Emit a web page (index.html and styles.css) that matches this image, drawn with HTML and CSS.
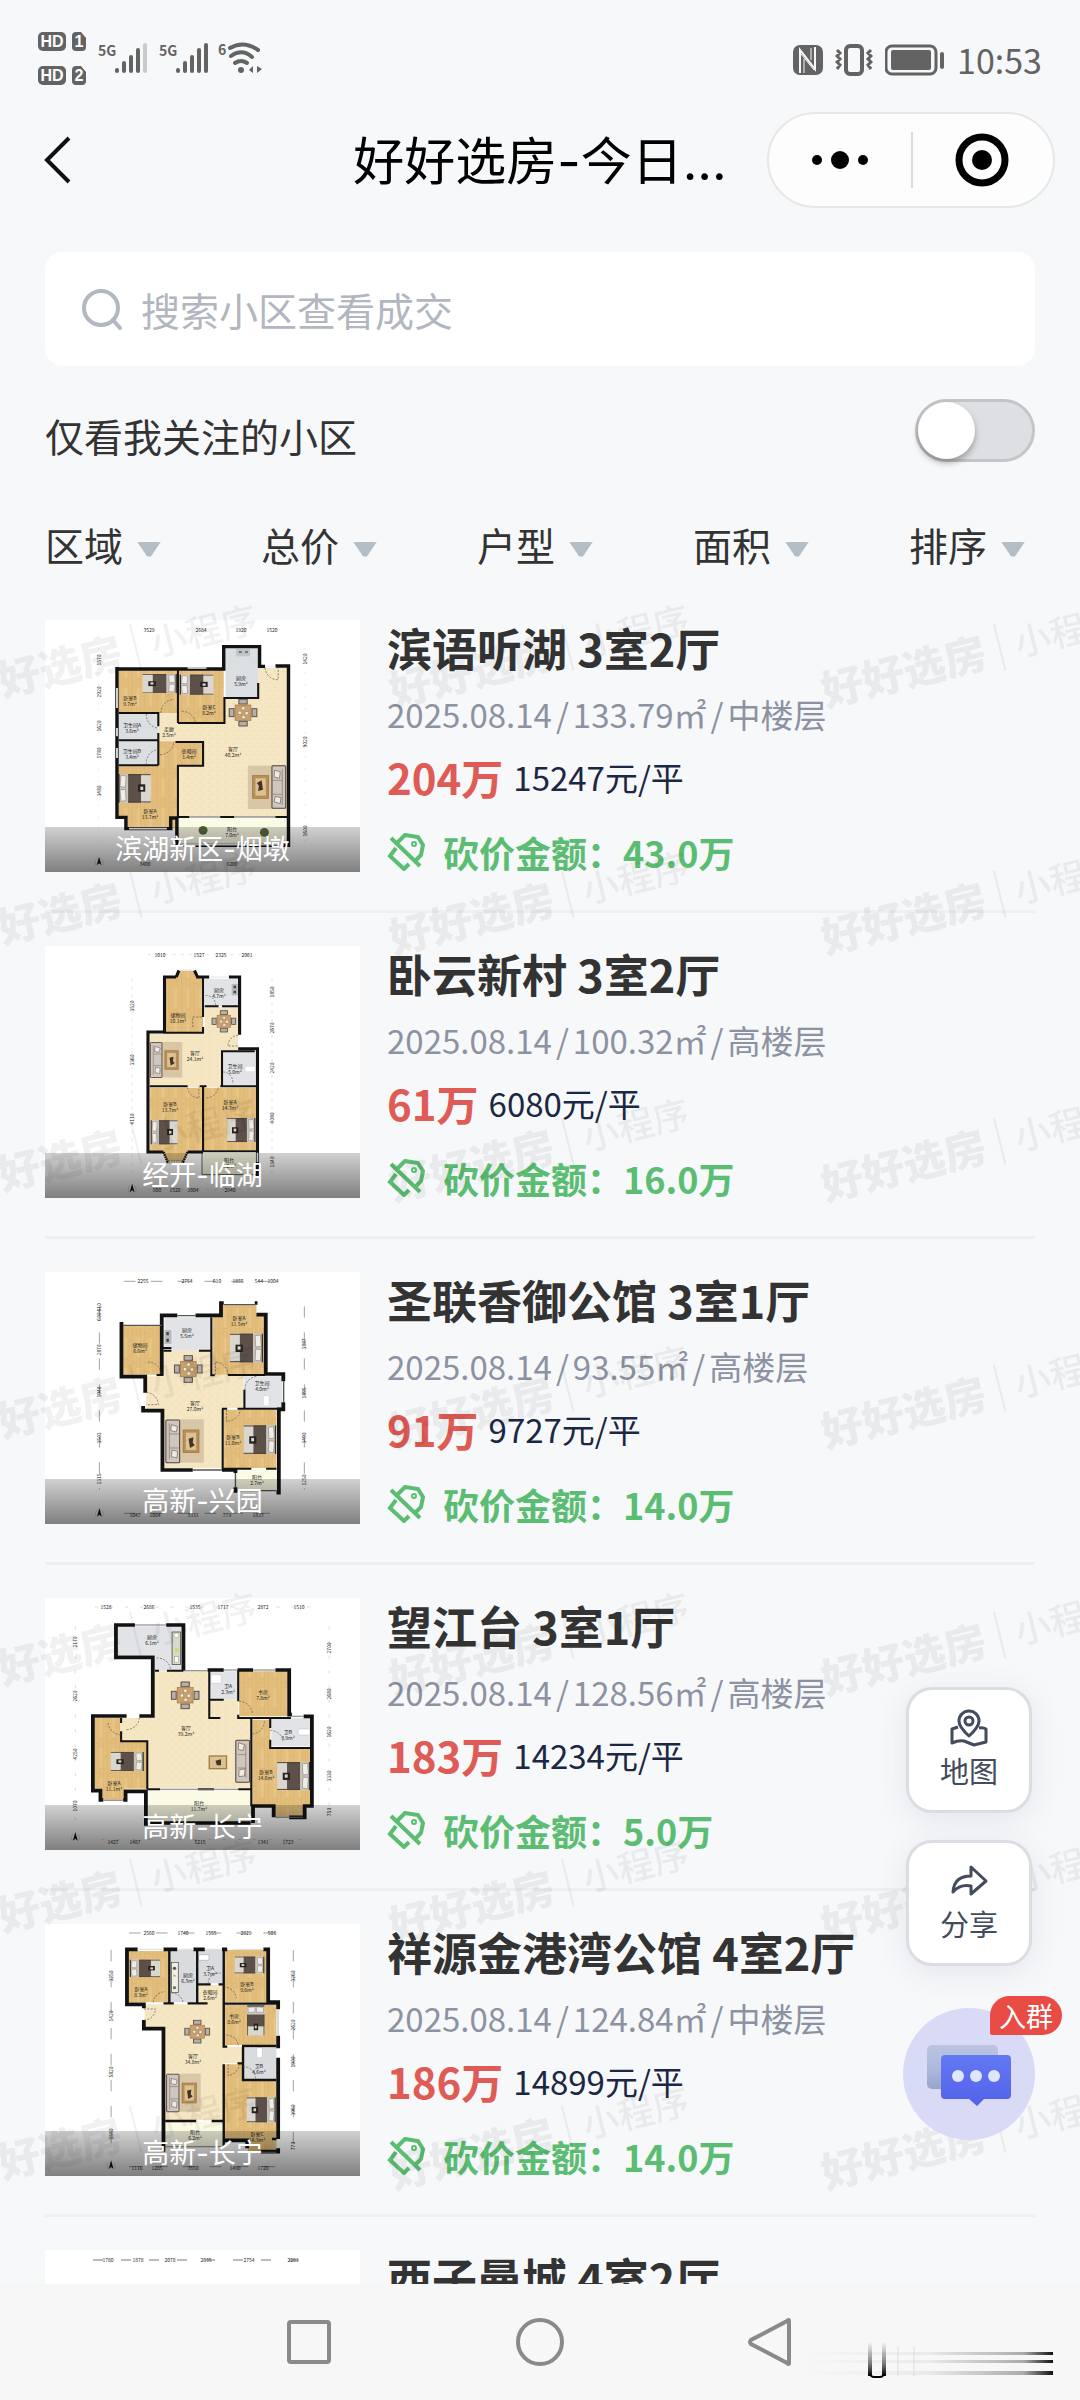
FILE: index.html
```html
<!DOCTYPE html>
<html lang="zh-CN">
<head>
<meta charset="utf-8">
<meta name="viewport" content="width=device-width, initial-scale=1">
<title>好好选房-今日成交</title>
<link rel="stylesheet" href="styles.css">
</head>
<body>
<!-- Shared furniture and floor textures for the plans -->
<svg class="defs" width="0" height="0" aria-hidden="true">
  <defs>
    <pattern id="wood" width="36" height="90" patternUnits="userSpaceOnUse">
      <rect width="36" height="90" fill="#e2bd7b"/>
      <rect width="12" height="60" fill="#e7c586"/>
      <path d="M0 0V90M12 0V90M24 0V90M0 60H12M12 25H24M24 75H36" stroke="#d3a964" stroke-width="1"/>
    </pattern>
    <pattern id="tile" width="24" height="24" patternUnits="userSpaceOnUse">
      <rect width="24" height="24" fill="#f6e7c4"/>
      <path d="M3 5H10M15 14H21M6 20H9" stroke="#eed9a9" stroke-width="2"/>
    </pattern>
    <g id="bed">
      <rect width="100" height="86" fill="#dad6d0"/>
      <rect x="30" width="40" height="86" fill="#5c5048"/>
      <path d="M0 2H70M0 84H70" stroke="#4c423b" stroke-width="3"/>
      <rect x="17" y="33" width="22" height="22" fill="#26221f"/>
      <rect x="23" y="38" width="9" height="10" fill="#d9d5cf"/>
      <rect x="70" width="28" height="86" fill="#c9c5bd"/>
      <path d="M76 6L92 4L95 38L78 40ZM78 46L95 48L92 82L76 80Z" fill="#efede8" stroke="#8d877f" stroke-width="2"/>
      <path d="M98 0V86" stroke="#3a332d" stroke-width="4"/>
    </g>
    <g id="table">
      <rect x="28" y="0" width="24" height="14" fill="#b7afa8" stroke="#5d534b" stroke-width="3"/>
      <rect x="28" y="66" width="24" height="14" fill="#b7afa8" stroke="#5d534b" stroke-width="3"/>
      <rect x="0" y="28" width="14" height="24" fill="#b7afa8" stroke="#5d534b" stroke-width="3"/>
      <rect x="66" y="28" width="14" height="24" fill="#b7afa8" stroke="#5d534b" stroke-width="3"/>
      <rect x="17" y="17" width="46" height="46" fill="#caa06c" stroke="#9a744a" stroke-width="2"/>
      <path d="M26 36h9v9h-9zM36 22h9v9h-9zM46 37h9v9h-9zM37 49h9v9h-9z" fill="#f8f1e2" stroke="#7c5c3b"/>
    </g>
    <g id="sofa">
      <rect x="38" y="0" width="72" height="130" fill="#d8c6a7"/>
      <rect x="50" y="32" width="46" height="68" fill="#b98f55" stroke="#94703f" stroke-width="2"/>
      <rect x="58" y="40" width="30" height="52" fill="#dcc193"/>
      <path d="M66 58L80 54L78 70L84 78L70 86Z" fill="#453425"/>
      <rect x="0" y="2" width="40" height="128" rx="3" fill="#cfc6be" stroke="#4b423c" stroke-width="3"/>
      <path d="M10 12V120M10 44H38M10 86H38" stroke="#80766e" stroke-width="2"/>
      <path d="M16 16L34 22L30 38L14 34ZM18 92L34 96L32 116L16 112Z" fill="#eeeae5" stroke="#6a6059" stroke-width="2"/>
    </g>
    <g id="north">
      <path d="M10 0L17 26L10 20L3 26Z" fill="#161616"/>
      <path d="M0 26Q-4 12 4 5M20 26Q24 12 16 5" fill="none" stroke="#999" stroke-width="1"/>
    </g>
  </defs>
</svg>

<div class="app">
  <header>
    <div class="status">
      <svg class="status-left" viewBox="0 0 250 80" role="img" aria-label="HD 1, HD 2, 5G, 5G, Wi-Fi 6">
        <g fill="#636363">
          <rect x="8" y="12" width="28" height="19" rx="5"/>
          <path d="M46 12H51L56 18V27Q56 31 52 31H46Q42 31 42 27V16Q42 12 46 12Z"/>
          <rect x="8" y="46" width="28" height="19" rx="5"/>
          <path d="M46 46H51L56 52V61Q56 65 52 65H46Q42 65 42 61V50Q42 46 46 46Z"/>
        </g>
        <g class="hd-text"><text x="22" y="27">HD</text><text x="49" y="27">1</text><text x="22" y="61">HD</text><text x="49" y="61">2</text></g>
        <g class="net-text"><text x="68" y="36">5G</text><text x="129" y="36">5G</text><text x="188" y="35">6</text></g>
        <g stroke="#636363" stroke-width="4" stroke-linecap="round">
          <path d="M87 50V51M94 43V51M101 37V51M108 30V51"/>
          <path d="M115 25V51" stroke="#c9cacb"/>
          <path d="M148 50V51M155 43V51M162 37V51M169 30V51M176 25V51"/>
        </g>
        <g fill="none" stroke="#636363" stroke-width="4" stroke-linecap="round">
          <path d="M200 28Q214 20 228 30M201 36Q212 28 222 37M205 43Q211 39 217 43"/>
        </g>
        <circle cx="211" cy="50" r="3" fill="#636363"/>
        <path d="M219 50L223 46V53ZM232 49L227 46V53Z" fill="#636363"/>
      </svg>
      <div class="status-right">
        <svg width="30" height="30" viewBox="0 0 30 30" aria-hidden="true"><rect width="30" height="30" rx="7" fill="#636363"/><path d="M7 28V5L22 24V2" fill="none" stroke="#f7f8fa" stroke-width="2"/><path d="M8 9L21 25M11 28V14M18 15V3" stroke="#f7f8fa" stroke-width="1"/></svg>
        <svg width="38" height="32" viewBox="0 0 38 32" aria-hidden="true" fill="none" stroke="#636363"><rect x="11" y="2" width="16" height="28" rx="4" stroke-width="4"/><path d="M2 6L5 9L2 12L5 15L2 18L5 21L2 25M36 6L33 9L36 12L33 15L36 18L33 21L36 25" stroke-width="3"/></svg>
        <svg width="60" height="32" viewBox="0 0 60 32" aria-hidden="true"><rect x="1" y="2" width="50" height="28" rx="6" fill="none" stroke="#636363" stroke-width="3"/><rect x="6" y="6" width="40" height="20" rx="2" fill="#636363"/><path d="M57 10V23" stroke="#636363" stroke-width="4" stroke-linecap="round"/></svg>
        <time>10:53</time>
      </div>
    </div>

    <div class="titlebar">
      <button class="back" type="button" aria-label="返回"><svg width="28" height="48" viewBox="0 0 28 48" fill="none" stroke="#111" stroke-width="4"><path d="M25 2L3 24L25 46"/></svg></button>
      <h1>好好选房-今日...</h1>
      <div class="capsule">
        <button type="button" aria-label="更多"><svg width="60" height="24" viewBox="0 0 60 24"><circle cx="7" cy="12" r="5"/><circle cx="30" cy="12" r="9"/><circle cx="53" cy="12" r="5"/></svg></button>
        <button type="button" aria-label="关闭"><svg width="56" height="56" viewBox="0 0 56 56"><circle cx="28" cy="28" r="23" fill="none" stroke="#000" stroke-width="7"/><circle cx="28" cy="28" r="10"/></svg></button>
      </div>
    </div>
  </header>

  <main>
    <label class="search">
      <svg width="42" height="42" viewBox="0 0 42 42" fill="none" stroke="#b2b8c2" stroke-width="4"><circle cx="20" cy="20" r="17"/><path d="M32 32L39 40" stroke-linecap="round"/></svg>
      <input type="search" placeholder="搜索小区查看成交" aria-label="搜索小区查看成交">
    </label>

    <label class="follow">
      <span>仅看我关注的小区</span>
      <input type="checkbox" role="switch">
    </label>

    <div class="filters">
      <button type="button">区域<i></i></button>
      <button type="button">总价<i></i></button>
      <button type="button">户型<i></i></button>
      <button type="button">面积<i></i></button>
      <button type="button">排序<i></i></button>
    </div>

    <div class="list">
      <article class="item">
        <figure>
          <svg class="plan" viewBox="0 0 315 252">
            <g transform="scale(.3444 .3333) translate(-131 -66)">
              <path d="M520 375H652V300H750V210H835V655H520ZM460 345H520V430H460Z" fill="url(#tile)"/>
              <path d="M345 215H515V345H345ZM520 215H650V375H520ZM515 435H590V500H515ZM345 505H460V430H515V690H370V660H345Z" fill="url(#wood)"/>
              <path d="M655 150H750V298H655ZM345 348H460V425H345ZM345 430H460V500H345Z" fill="#dcdfe2"/>
              <path d="M520 660H832V738H520Z" fill="#fbfae4"/>
              <use href="#bed" transform="translate(414 228) scale(1 .66)"/>
              <use href="#bed" transform="translate(620 290) rotate(180) scale(.98 .7)"/>
              <use href="#bed" transform="translate(438 614) rotate(180) scale(.94 1)"/>
              <use href="#table" transform="translate(666 304)"/>
              <use href="#sofa" transform="translate(830 633) rotate(180)"/>
              <rect x="686" y="153" width="40" height="22" fill="#bfc4c8"/><path d="M694 162H702M712 162H720" stroke="#555" stroke-width="5"/>
              <g fill="none" stroke="#121212" stroke-linejoin="miter">
                <path d="M340 207V658H366V692H496V660H514V742H838V204H800M340 213H650V146H754V205H770M515 742H838" stroke-width="10"/>
                <path d="M517 213V375M517 375H652V300H750V255M345 345H460V385M345 427H460M460 405V502M345 502H460M510 432H590V503H517V660M520 657H550M640 657H680M800 657H835" stroke-width="6"/>
                <path d="M550 657H800" stroke-width="2"/>
              </g>
              <path d="M545 210H600M340 270V330M340 390V415M340 450V480M375 692H485M770 206H800M525 740H825" stroke="#eceff1" stroke-width="5"/>
              <path d="M468 345A36 38 0 0 1 505 305M528 340A40 38 0 0 1 568 375M425 348A36 42 0 0 0 458 390M425 500A36 42 0 0 1 458 455M465 470A40 40 0 0 0 505 432M770 210A36 38 0 0 0 808 245V205" fill="none" stroke="#555" stroke-width="2" stroke-dasharray="6 4"/>
              <circle cx="590" cy="697" r="13" fill="#596b3d"/><circle cx="768" cy="703" r="13" fill="#596b3d"/>
              <path d="M286 150V745M886 150V745" stroke="#ccc" stroke-width="1" stroke-dasharray="6 30"/>
              <use href="#north" x="278" y="776"/>
            </g>
            <g class="plan-text">
              <text x="104" y="12">3529</text><text x="156" y="12">2684</text><text x="196" y="12">1920</text><text x="227" y="12">1520</text>
              <text x="85" y="80">卧室B</text><text x="85" y="86">9.7m²</text><text x="164" y="89">卧室C</text><text x="164" y="95">8.2m²</text><text x="196" y="60">厨房</text><text x="196" y="66">5.9m²</text>
              <text x="87" y="107">卫生间A</text><text x="87" y="113">3.6m²</text><text x="87" y="133">卫生间B</text><text x="87" y="139">3.4m²</text><text x="124" y="111">走廊</text><text x="124" y="117">2.5m²</text><text x="144" y="133">衣帽间</text><text x="144" y="139">1.4m²</text>
              <text x="188" y="131">客厅</text><text x="188" y="137">40.2m²</text><text x="105" y="193">卧室A</text><text x="105" y="199">13.7m²</text><text x="187" y="211">阳台</text><text x="187" y="217">7.0m²</text>
              <text x="100" y="246">3400</text><text x="187" y="246">6200</text>
            </g>
            <g class="plan-text side"><text transform="translate(56 40) rotate(-90)">1570</text><text transform="translate(56 72) rotate(-90)">2920</text><text transform="translate(56 106) rotate(-90)">1620</text><text transform="translate(56 133) rotate(-90)">1780</text><text transform="translate(56 171) rotate(-90)">3480</text><text transform="translate(262 39) rotate(-90)">1420</text><text transform="translate(262 122) rotate(-90)">9020</text><text transform="translate(262 211) rotate(-90)">1600</text></g>
          </svg>
          <figcaption>滨湖新区-烟墩</figcaption>
        </figure>
        <div class="info">
          <h2>滨语听湖 3室2厅</h2>
          <p class="meta"><span>2025.08.14</span><span>/</span><span>133.79㎡</span><span>/</span><span>中楼层</span></p>
          <p class="price"><strong>204万</strong><span>15247元/平</span></p>
          <p class="cut"><svg class="tag" viewBox="0 0 38 38"><path d="M11 9L18 2L31 4L36 12L34 22L29 27M22 31L17 36L3 23L9 15M4 5L33 33"/><circle cx="27" cy="11" r="1"/></svg>砍价金额：43.0万</p>
        </div>
      </article>

      <article class="item">
        <figure>
          <svg class="plan" viewBox="0 0 315 252">
            <g transform="scale(.3444 .3333) translate(-131 -52)">
              <path d="M432 315H595V235H692V365H645V475H432Z" fill="url(#tile)"/>
              <path d="M480 145H512L520 125H565L572 145H590V312H480ZM435 477H588V668H545L530 700H485L475 668H435ZM592 477H743V665H592Z" fill="url(#wood)"/>
              <path d="M595 150H692V233H595ZM645 368H743V470H645Z" fill="#e1e3e6"/>
              <path d="M592 668H743V742H592Z" fill="#fbfae4"/>
              <rect x="673" y="166" width="18" height="34" fill="#b5babe"/><path d="M682 171V179M682 186V194" stroke="#444" stroke-width="7"/>
              <rect x="712" y="413" width="30" height="16" rx="4" fill="#fff" stroke="#bbb"/>
              <use href="#sofa" transform="translate(437 340) scale(.84 .82)"/>
              <use href="#table" transform="translate(616 246) scale(.86 .8)"/>
              <use href="#bed" transform="translate(516 647) rotate(180) scale(.78 .84)"/>
              <use href="#bed" transform="translate(660 568) scale(.82 .84)"/>
              <g fill="none" stroke="#121212">
                <path d="M478 312V145H512M570 145H608M665 145H696V318M692 360H748V668M748 650V742M478 310H430V670H475M545 670H590M512 145L520 125M565 125L574 145" stroke-width="9"/>
                <path d="M590 145V265M590 295V312H475M595 233H635M645 233H692M645 368H740M645 365V470M435 473H545M580 473H600M640 473H745M590 475V668M590 668H745" stroke-width="6"/>
                <path d="M475 670L487 700H532L545 670" stroke-width="7" stroke-dasharray="5 2"/>
                <path d="M587 670V738H745" stroke-width="2"/>
              </g>
              <path d="M608 145H665M520 124H565M490 700H528M748 672V700" stroke="#eceff1" stroke-width="5"/>
              <path d="M597 200A30 32 0 0 1 627 232M692 320A32 32 0 0 0 662 352H692M560 295V265H590M545 477A34 34 0 0 0 578 508V475M600 508A36 36 0 0 0 634 475M648 430A30 30 0 0 1 676 465" fill="none" stroke="#555" stroke-width="2" stroke-dasharray="6 4"/>
              <path d="M430 78H745M384 150V745M790 150V745M430 782H745" stroke="#aaa" stroke-width="1" stroke-dasharray="8 16"/>
              <use href="#north" x="374" y="765"/>
            </g>
            <g class="plan-text">
              <text x="115" y="11">1010</text><text x="154" y="11">1527</text><text x="176" y="11">2325</text><text x="202" y="11">2061</text>
              <text x="133" y="71">储物间</text><text x="133" y="77">10.1m²</text><text x="174" y="46">厨房</text><text x="174" y="52">4.7m²</text><text x="150" y="109">客厅</text><text x="150" y="115">24.1m²</text><text x="190" y="122">卫生间</text><text x="190" y="128">5.0m²</text>
              <text x="125" y="160">卧室B</text><text x="125" y="166">13.7m²</text><text x="185" y="158">卧室A</text><text x="185" y="164">14.3m²</text><text x="184" y="216">阳台</text><text x="184" y="222">3.2m²</text>
              <text x="112" y="246">900</text><text x="130" y="246">1520</text><text x="148" y="246">1004</text><text x="185" y="246">2940</text>
            </g>
            <g class="plan-text side"><text transform="translate(89 60) rotate(-90)">3520</text><text transform="translate(89 114) rotate(-90)">3360</text><text transform="translate(89 173) rotate(-90)">4110</text><text transform="translate(229 46) rotate(-90)">1850</text><text transform="translate(229 82) rotate(-90)">2670</text><text transform="translate(229 122) rotate(-90)">2420</text><text transform="translate(229 172) rotate(-90)">4080</text><text transform="translate(229 216) rotate(-90)">1340</text></g>
          </svg>
          <figcaption>经开-临湖</figcaption>
        </figure>
        <div class="info">
          <h2>卧云新村 3室2厅</h2>
          <p class="meta"><span>2025.08.14</span><span>/</span><span>100.32㎡</span><span>/</span><span>高楼层</span></p>
          <p class="price"><strong>61万</strong><span>6080元/平</span></p>
          <p class="cut"><svg class="tag" viewBox="0 0 38 38"><path d="M11 9L18 2L31 4L36 12L34 22L29 27M22 31L17 36L3 23L9 15M4 5L33 33"/><circle cx="27" cy="11" r="1"/></svg>砍价金额：16.0万</p>
        </div>
      </article>

      <article class="item">
        <figure>
          <svg class="plan" viewBox="0 0 315 252">
            <g transform="scale(.3444 .3333) translate(-131 -72)">
              <path d="M475 308H612V380H708V480H645V660H475V490H425V385H475Z" fill="url(#tile)"/>
              <path d="M358 232H470V380H358ZM618 200H642V172H745V200H768V380H618ZM650 485H803V660H650Z" fill="url(#wood)"/>
              <path d="M478 208H612V308H478ZM710 385H820V480H710Z" fill="#e1e3e6"/>
              <path d="M685 662H803V728H685Z" fill="#fbfae4"/>
              <rect x="478" y="246" width="20" height="42" fill="#b5babe"/><path d="M487 252V262M487 272V282" stroke="#444" stroke-width="7"/>
              <rect x="765" y="443" width="17" height="30" rx="3" fill="#fff" stroke="#bbb"/>
              <use href="#table" transform="translate(507 323)"/>
              <use href="#sofa" transform="translate(482 514)"/>
              <use href="#bed" transform="translate(668 257) scale(.96 1)"/>
              <use href="#bed" transform="translate(708 532) scale(.94 1)"/>
              <g fill="none" stroke="#121212">
                <path d="M353 222V386H422V434M416 474V488H472V666H560M470 380V202H515M568 202H642V165H650M740 165H748M745 200H772V378H823V400M823 463V484H810V734H803M645 666H684V675M684 718V734" stroke-width="11"/>
                <path d="M472 300H498M475 308H498M578 308H614V382H624M614 208V380M455 381H475M662 381H770M710 425V480M645 482H660M690 482H820M647 482V665M650 662H730M773 662H803" stroke-width="6"/>
                <path d="M358 232H470M515 203H568M650 170H742M560 666H645M824 400V463M684 675V718M690 728H803" stroke-width="4" stroke="#555"/>
              </g>
              <path d="M430 342A38 38 0 0 1 468 380M425 433A38 38 0 0 1 460 470H425M626 380V342A38 38 0 0 1 662 380M658 485V520A40 38 0 0 0 698 485M712 425A40 36 0 0 1 748 385" fill="none" stroke="#555" stroke-width="2" stroke-dasharray="6 4"/>
              <path d="M360 100H815M289 175V725M884 175V725M360 796H803" stroke="#777" stroke-width="2" stroke-dasharray="34 44"/>
              <use href="#north" x="279" y="780"/>
            </g>
            <g class="plan-text">
              <text x="98" y="11">2255</text><text x="142" y="11">2754</text><text x="172" y="11">610</text><text x="193" y="11">1855</text><text x="214" y="11">544</text><text x="228" y="11">1004</text>
              <text x="95" y="75">储物间</text><text x="95" y="81">6.6m²</text><text x="142" y="60">厨房</text><text x="142" y="66">5.5m²</text><text x="194" y="48">卧室A</text><text x="194" y="54">11.5m²</text><text x="217" y="113">卫生间</text><text x="217" y="119">4.0m²</text><text x="150" y="133">客厅</text><text x="150" y="139">27.0m²</text><text x="188" y="167">卧室B</text><text x="188" y="173">11.0m²</text><text x="212" y="207">阳台</text><text x="212" y="213">2.7m²</text>
              <text x="90" y="245">1047</text><text x="110" y="245">1084</text><text x="148" y="245">3331</text><text x="182" y="245">779</text><text x="213" y="245">1833</text>
            </g>
            <g class="plan-text side"><text transform="translate(56 40) rotate(-90)">600 610</text><text transform="translate(56 78) rotate(-90)">2870</text><text transform="translate(56 120) rotate(-90)">1948</text><text transform="translate(56 166) rotate(-90)">3503</text><text transform="translate(56 207) rotate(-90)">1315</text><text transform="translate(261 72) rotate(-90)">3887</text><text transform="translate(261 121) rotate(-90)">1895</text><text transform="translate(261 166) rotate(-90)">3490</text><text transform="translate(261 208) rotate(-90)">1250</text></g>
          </svg>
          <figcaption>高新-兴园</figcaption>
        </figure>
        <div class="info">
          <h2>圣联香御公馆 3室1厅</h2>
          <p class="meta"><span>2025.08.14</span><span>/</span><span>93.55㎡</span><span>/</span><span>高楼层</span></p>
          <p class="price"><strong>91万</strong><span>9727元/平</span></p>
          <p class="cut"><svg class="tag" viewBox="0 0 38 38"><path d="M11 9L18 2L31 4L36 12L34 22L29 27M22 31L17 36L3 23L9 15M4 5L33 33"/><circle cx="27" cy="11" r="1"/></svg>砍价金额：14.0万</p>
        </div>
      </article>

      <article class="item">
        <figure>
          <svg class="plan" viewBox="0 0 315 252">
            <g transform="scale(.3444 .3333) translate(-131 -90)">
              <path d="M448 310H608V395H692V450H730V660H428V520H352V450H448Z" fill="url(#tile)"/>
              <path d="M695 310H835V445H695ZM275 450H350V520H428V662H362V695H292V662H275ZM733 455H785V540H903V710H885V746H797V710H733Z" fill="url(#wood)"/>
              <path d="M340 175H528V308H450V262H340ZM608 310H692V395H608ZM788 450H903V535H788Z" fill="#e1e3e6"/>
              <path d="M430 665H728V762H430Z" fill="#fbfae4"/>
              <rect x="500" y="192" width="25" height="98" fill="#d8dbc8" stroke="#333" stroke-width="2"/><circle cx="513" cy="202" r="7" fill="#fff" stroke="#666"/><circle cx="513" cy="246" r="6" fill="#d5d56b"/><rect x="507" y="266" width="12" height="18" fill="#fff" stroke="#666"/>
              <rect x="613" y="320" width="30" height="26" rx="5" fill="#fff" stroke="#aaa"/><rect x="866" y="483" width="34" height="18" rx="4" fill="#fff" stroke="#aaa"/>
              <use href="#table" transform="translate(498 342)"/>
              <use href="#bed" transform="translate(322 552) scale(.96 .66)"/>
              <use href="#bed" transform="translate(805 582) scale(.96 .98)"/>
              <rect x="685" y="517" width="40" height="126" rx="3" fill="#cfc6be" stroke="#4b423c" stroke-width="3"/><path d="M714 530V630M690 560H714M690 600H714" stroke="#80766e" stroke-width="2"/><path d="M693 524L710 530L706 548L692 544ZM694 606L712 602L710 624L694 626Z" fill="#eeeae5" stroke="#6a6059" stroke-width="2"/>
              <rect x="608" y="564" width="50" height="38" fill="#dcc193" stroke="#a47c45" stroke-width="4"/><path d="M626 578L642 574V592H630Z" fill="#453425"/>
              <g fill="none" stroke="#121212">
                <path d="M392 171H337V268H444V444H405M483 171H533V308M368 444H270V668H292V696H300M358 696H365V670H424V768H430M603 306H650M690 306H735M800 306H840V440H848M882 445H906V714H885V748H840M795 748V714H735V765M728 765H430" stroke-width="11"/>
                <path d="M450 308H462M485 308H533M608 306V450H640M608 395H650M692 306V400M692 440V450H845M730 450V715M785 450V480M785 515V540H903M352 450V465M352 490V520H428V664M428 664H465M575 664H622M692 664H733" stroke-width="6"/>
                <path d="M392 171H483M533 308H603M650 306H690M735 306H800M848 445H882M300 697H358M800 748H880M465 664H692" stroke="#777" stroke-width="3"/>
              </g>
              <path d="M455 270A38 36 0 0 1 495 308M368 485A38 38 0 0 0 405 448M314 465A38 40 0 0 0 350 500M695 400A38 38 0 0 1 733 438M733 498A38 40 0 0 0 768 458M785 487A38 36 0 0 1 822 520" fill="none" stroke="#555" stroke-width="2" stroke-dasharray="6 4"/>
              <path d="M275 117H905M219 175V760M956 175V745M295 815H885" stroke="#999" stroke-width="1" stroke-dasharray="10 34"/>
              <use href="#north" x="209" y="792"/>
            </g>
            <g class="plan-text">
              <text x="61" y="11">1528</text><text x="104" y="11">2686</text><text x="150" y="11">1535</text><text x="178" y="11">1717</text><text x="218" y="11">2872</text><text x="254" y="11">1510</text>
              <text x="107" y="41">厨房</text><text x="107" y="47">6.1m²</text><text x="183" y="90">卫A</text><text x="183" y="96">2.3m²</text><text x="218" y="96">书房</text><text x="218" y="102">7.8m²</text><text x="141" y="132">客厅</text><text x="141" y="138">39.2m²</text><text x="243" y="136">卫B</text><text x="243" y="142">3.9m²</text><text x="221" y="176">卧室B</text><text x="221" y="182">14.6m²</text><text x="69" y="187">卧室A</text><text x="69" y="193">11.1m²</text><text x="154" y="207">阳台</text><text x="154" y="213">11.7m²</text>
              <text x="68" y="246">1427</text><text x="90" y="246">1487</text><text x="155" y="246">5215</text><text x="218" y="246">1341</text><text x="243" y="246">1723</text>
            </g>
            <g class="plan-text side"><text transform="translate(32 44) rotate(-90)">2170</text><text transform="translate(32 98) rotate(-90)">2620</text><text transform="translate(32 156) rotate(-90)">4250</text><text transform="translate(32 208) rotate(-90)">1070</text><text transform="translate(286 50) rotate(-90)">2700</text><text transform="translate(286 96) rotate(-90)">2680</text><text transform="translate(286 134) rotate(-90)">1620</text><text transform="translate(286 178) rotate(-90)">3330</text><text transform="translate(286 214) rotate(-90)">750</text></g>
          </svg>
          <figcaption>高新-长宁</figcaption>
        </figure>
        <div class="info">
          <h2>望江台 3室1厅</h2>
          <p class="meta"><span>2025.08.14</span><span>/</span><span>128.56㎡</span><span>/</span><span>高楼层</span></p>
          <p class="price"><strong>183万</strong><span>14234元/平</span></p>
          <p class="cut"><svg class="tag" viewBox="0 0 38 38"><path d="M11 9L18 2L31 4L36 12L34 22L29 27M22 31L17 36L3 23L9 15M4 5L33 33"/><circle cx="27" cy="11" r="1"/></svg>砍价金额：5.0万</p>
        </div>
      </article>

      <article class="item">
        <figure>
          <svg class="plan" viewBox="0 0 315 252">
            <g transform="scale(.3444 .3333) translate(-131 -77)">
              <path d="M420 318H577V260H650V445H703V495H650V665H480V388H420Z" fill="url(#tile)"/>
              <path d="M373 158H490V312H373ZM653 155H775V312H653ZM653 320H803V440H653ZM653 498H703V548H803V762H720V722H653Z" fill="url(#wood)"/>
              <path d="M495 155H572V312H495ZM577 155H650V255H577ZM706 448H803V543H706Z" fill="#d9dcdf"/>
              <path d="M480 670H648V745H480Z" fill="#fbfae4"/>
              <rect x="498" y="192" width="20" height="90" fill="#f1efe2" stroke="#444" stroke-width="2"/><circle cx="507" cy="210" r="5" fill="#555"/><circle cx="507" cy="232" r="3" fill="#8a5"/><circle cx="507" cy="268" r="5" fill="#777"/>
              <rect x="577" y="169" width="30" height="17" rx="3" fill="#fff" stroke="#777"/><rect x="746" y="448" width="16" height="30" rx="4" fill="#fff" stroke="#aaa"/>
              <use href="#bed" transform="translate(465 236) rotate(180) scale(.88 .6)"/>
              <use href="#bed" transform="translate(682 175) scale(.86 .58)"/>
              <use href="#bed" transform="translate(718 411) rotate(-90) scale(.9 .58)"/>
              <use href="#bed" transform="translate(717 597) scale(.84 .87)"/>
              <use href="#table" transform="translate(537 366) scale(.9 .85)"/>
              <use href="#sofa" transform="translate(484 526) scale(.9 .88)"/>
              <g fill="none" stroke="#121212">
                <path d="M400 153H369V318H418V330M475 153H515M562 153H595M645 153H660M765 153H779V311H808V333M418 365V391H475V755H480M808 412V450M808 478V722M808 750V760H758M650 726H718V750" stroke-width="11"/>
                <path d="M492 153V315H475M492 315H505M545 315H603M573 153V315M573 258H612M635 258H652M650 153V310M650 316H808M650 310V445H660M703 443H803M706 445V495H690M706 495V545H803M650 498V725M480 668H570M615 668H650M803 722H790M650 668V745" stroke-width="7"/>
                <path d="M480 745H650M720 762H803M808 333V412" stroke="#777" stroke-width="3"/>
              </g>
              <path d="M400 153H475M515 153H562M595 153H645M675 153H765M808 333V412" stroke="#dfe2e4" stroke-width="4"/>
              <path d="M445 312A36 36 0 0 1 480 280M498 284A34 34 0 0 1 532 312M418 332H452A36 36 0 0 1 418 366M650 266A36 36 0 0 1 686 300M658 410A36 34 0 0 1 692 443M663 498V532A38 38 0 0 0 695 498M706 505A36 34 0 0 1 742 540M605 255A30 30 0 0 1 642 225" fill="none" stroke="#555" stroke-width="2" stroke-dasharray="6 4"/>
              <path d="M375 104H800M323 155V750M852 155V750M375 805H803" stroke="#777" stroke-width="2" stroke-dasharray="34 44"/>
              <use href="#north" x="313" y="786"/>
            </g>
            <g class="plan-text">
              <text x="104" y="11">2560</text><text x="138" y="11">1740</text><text x="166" y="11">1555</text><text x="201" y="11">2829</text><text x="227" y="11">508</text>
              <text x="96" y="67">卧室A</text><text x="96" y="73">8.3m²</text><text x="143" y="53">厨房</text><text x="143" y="59">6.3m²</text><text x="165" y="46">卫A</text><text x="165" y="52">3.7m²</text><text x="165" y="70">衣帽间</text><text x="165" y="76">2.6m²</text><text x="202" y="62">卧室B</text><text x="202" y="68">9.6m²</text><text x="189" y="94">书房</text><text x="189" y="100">8.6m²</text><text x="148" y="134">客厅</text><text x="148" y="140">34.8m²</text><text x="214" y="144">卫B</text><text x="214" y="150">4.6m²</text><text x="212" y="212">卧室C</text><text x="212" y="218">14.3m²</text><text x="150" y="210">阳台</text><text x="150" y="216">6.2m²</text>
              <text x="92" y="246">1110</text><text x="112" y="246">1285</text><text x="148" y="246">3550</text><text x="190" y="246">1490</text><text x="218" y="246">1720</text>
            </g>
            <g class="plan-text side"><text transform="translate(68 52) rotate(-90)">3250</text><text transform="translate(68 92) rotate(-90)">1420</text><text transform="translate(68 148) rotate(-90)">5820</text><text transform="translate(68 210) rotate(-90)">1580</text><text transform="translate(250 52) rotate(-90)">3260</text><text transform="translate(250 101) rotate(-90)">2620</text><text transform="translate(250 138) rotate(-90)">1900</text><text transform="translate(250 186) rotate(-90)">3960</text><text transform="translate(250 222) rotate(-90)">770</text></g>
          </svg>
          <figcaption>高新-长宁</figcaption>
        </figure>
        <div class="info">
          <h2>祥源金港湾公馆 4室2厅</h2>
          <p class="meta"><span>2025.08.14</span><span>/</span><span>124.84㎡</span><span>/</span><span>中楼层</span></p>
          <p class="price"><strong>186万</strong><span>14899元/平</span></p>
          <p class="cut"><svg class="tag" viewBox="0 0 38 38"><path d="M11 9L18 2L31 4L36 12L34 22L29 27M22 31L17 36L3 23L9 15M4 5L33 33"/><circle cx="27" cy="11" r="1"/></svg>砍价金额：14.0万</p>
        </div>
      </article>

      <article class="item">
        <figure>
          <svg class="plan" viewBox="0 0 315 252">
            <path d="M48 10H268" stroke="#777" stroke-width="1" stroke-dasharray="10 18"/>
            <g class="plan-text"><text x="63" y="12">1780</text><text x="93" y="12">1878</text><text x="125" y="12">2078</text><text x="161" y="12">2635</text><text x="204" y="12">2754</text><text x="248" y="12">2281</text></g>
          </svg>
        </figure>
        <div class="info">
          <h2>西子曼城 4室2厅</h2>
        </div>
      </article>

      <svg class="watermark" width="100%" height="100%" aria-hidden="true">
        <defs>
          <pattern id="mark" width="432" height="247" patternUnits="userSpaceOnUse" patternTransform="translate(-50 -96)">
            <g transform="translate(12 216) rotate(-14)">
              <text class="mark-name" x="0" y="0">好好选房</text>
              <path d="M183 -40V8" stroke="#000" stroke-width="2"/>
              <text class="mark-kind" x="199" y="-2">小程序</text>
            </g>
          </pattern>
        </defs>
        <rect width="100%" height="100%" fill="url(#mark)"/>
      </svg>
    </div>
  </main>

  <nav>
    <button type="button" aria-label="最近任务"><svg width="48" height="48" viewBox="0 0 48 48"><rect x="4" y="4" width="40" height="40" rx="2"/></svg></button>
    <button type="button" aria-label="主屏幕"><svg width="48" height="48" viewBox="0 0 48 48"><circle cx="24" cy="24" r="22"/></svg></button>
    <button type="button" aria-label="返回"><svg width="48" height="48" viewBox="0 0 48 48"><path d="M42 3V45Q42 47 40 45L4 26Q2 24 4 22L40 3Q42 1 42 3Z"/></svg></button>
    <svg class="smudge" width="264" height="50" viewBox="0 0 264 50" aria-hidden="true">
      <defs>
        <linearGradient id="fade-x"><stop offset="0" stop-color="#222" stop-opacity="0"/><stop offset=".5" stop-color="#222" stop-opacity=".06"/><stop offset=".88" stop-color="#222" stop-opacity=".35"/><stop offset="1" stop-color="#111"/></linearGradient>
        <linearGradient id="fade-y" x1="0" y1="0" x2="0" y2="1"><stop offset="0" stop-color="#111" stop-opacity="0"/><stop offset=".6" stop-color="#111" stop-opacity=".5"/><stop offset="1" stop-color="#000"/></linearGradient>
      </defs>
      <rect x="10" y="18" width="250" height="3" fill="url(#fade-x)"/><rect x="10" y="26" width="250" height="3" fill="url(#fade-x)"/><rect x="10" y="37" width="250" height="4" fill="url(#fade-x)"/>
      <rect x="75" y="8" width="4" height="34" fill="url(#fade-y)"/><rect x="89" y="8" width="4" height="34" fill="url(#fade-y)"/><path d="M77 40Q78 43 81 43H87Q90 43 91 40" fill="none" stroke="#000" stroke-width="2"/>
      <path d="M105 12V42M121 12V42" stroke="#ddd"/>
    </svg>
  </nav>

  <aside class="floats">
    <button class="tool" type="button"><svg width="40" height="38" viewBox="0 0 40 38" fill="none" stroke="#434b5c" stroke-width="3" stroke-linejoin="round"><path d="M20 27Q10 18 10 12A10 10 0 0 1 30 12Q30 18 20 27Z"/><circle cx="20" cy="12" r="4"/><path d="M9 18L3 20V34Q10 31 15 32L25 36L37 33V20Q34 18 30 19"/></svg>地图</button>
    <button class="tool" type="button"><svg width="40" height="38" viewBox="0 0 40 38" fill="none" stroke="#434b5c" stroke-width="3" stroke-linejoin="round"><path d="M22 5L37 19L22 32V24Q11 22 4 30Q5 14 22 14Z"/></svg>分享</button>
    <button class="chat" type="button">
      <svg width="132" height="132" viewBox="0 0 132 132" aria-hidden="true">
        <defs>
          <linearGradient id="back" x1="0" y1="0" x2="0" y2="1"><stop offset="0" stop-color="#bcc4e2"/><stop offset=".5" stop-color="#b0b9dc"/><stop offset="1" stop-color="#98a4ce"/></linearGradient>
          <linearGradient id="front" x1="0" y1="0" x2="0" y2="1"><stop offset="0" stop-color="#6379f3"/><stop offset="1" stop-color="#5262ea"/></linearGradient>
        </defs>
        <rect x="24" y="37" width="71" height="44" rx="5" fill="url(#back)"/>
        <path d="M42 47H104Q108 47 108 51V87Q108 91 104 91H81L74 98L66 91H42Q38 91 38 87V51Q38 47 42 47Z" fill="url(#front)"/>
        <g fill="#e2e6fb"><circle cx="55" cy="68" r="6"/><circle cx="73" cy="68" r="6"/><circle cx="91" cy="68" r="6"/></g>
      </svg>
      <span class="badge">入群</span>
    </button>
  </aside>
</div>
</body>
</html>
```
FILE: styles.css
```css
* { box-sizing: border-box; }

body {
  margin: 0;
  background: #f7f8fa;
  color: #333;
  font-family: "Noto Sans CJK SC", "Noto Sans", sans-serif;
}

h1, h2, p, figure { margin: 0; }

button {
  margin: 0;
  padding: 0;
  border: 0;
  background: none;
  color: inherit;
  font: inherit;
}

svg { display: block; flex: none; }
.defs { position: absolute; }

.app {
  position: relative;
  display: flex;
  flex-direction: column;
  height: 100vh;
}

/* Status bar */
.status {
  display: flex;
  justify-content: space-between;
  padding: 20px 38px 12px 30px;
}
.status-left { width: 250px; height: 80px; }
.hd-text { fill: #fff; font: 700 16px "Liberation Sans", sans-serif; text-anchor: middle; }
.net-text { fill: #636363; font: 700 14px "Noto Sans CJK SC", sans-serif; }
.status-right { display: flex; align-items: center; gap: 12px; color: #636363; }
.status-right time { font-size: 34px; line-height: 40px; }

/* Title bar */
.titlebar {
  display: grid;
  grid-template-columns: 1fr auto 1fr;
  align-items: center;
  padding: 0 25px;
}
.back { padding-left: 19px; }
.titlebar h1 {
  padding-top: 4px;
  font: 400 51px/64px Inter, "Noto Sans CJK SC", sans-serif;
  color: #000;
}
.capsule {
  display: grid;
  grid-template-columns: 1fr 1fr;
  justify-self: end;
  width: 288px;
  height: 96px;
  border: 2px solid #e6e7e8;
  border-radius: 48px;
  background: #fdfdfd;
}
.capsule button { display: grid; place-items: center; position: relative; }
.capsule button + button::before {
  content: "";
  position: absolute;
  left: 0;
  top: 18px;
  bottom: 18px;
  border-left: 2px solid #dcdcdc;
}

main { flex: 1; min-height: 0; display: flex; flex-direction: column; }

/* Search */
.search {
  display: flex;
  align-items: center;
  gap: 18px;
  height: 114px;
  margin: 44px 45px 0;
  padding: 0 36px;
  border-radius: 18px;
  background: #fff;
}
.search input {
  flex: 1;
  min-width: 0;
  padding: 0;
  border: 0;
  outline: 0;
  background: none;
  font: 400 39px/56px "Noto Sans CJK SC", sans-serif;
}
.search input::placeholder { color: #b2b6bf; opacity: 1; }

/* Follow switch */
.follow {
  display: flex;
  justify-content: space-between;
  align-items: flex-start;
  margin: 33px 45px 0;
  font-size: 39px;
  line-height: 56px;
}
.follow span { padding-top: 8px; }
.follow input {
  appearance: none;
  width: 120px;
  height: 63px;
  margin: 0;
  border: 3px solid #c4c5c9;
  border-radius: 32px;
  background: #dedfe2;
}
.follow input::before {
  content: "";
  display: block;
  width: 57px;
  height: 57px;
  border-radius: 50%;
  background: #fff;
  box-shadow: 0 4px 6px rgba(0, 0, 0, .3);
}
.follow input:checked { background: #57bd6c; }
.follow input:checked::before { margin-left: auto; }

/* Filters */
.filters {
  display: grid;
  grid-template-columns: repeat(5, 1fr);
  margin-top: 53px;
}
.filters button {
  display: flex;
  align-items: center;
  gap: 14px;
  padding-left: 45px;
  font-size: 39px;
  line-height: 56px;
}
.filters i {
  width: 24px;
  height: 15px;
  margin-top: 10px;
  background: #b4bec6;
  clip-path: polygon(0 0, 100% 0, 58% 100%, 42% 100%);
}

/* Listings */
.list {
  position: relative;
  flex: 1;
  min-height: 0;
  margin-top: 15px;
  padding: 0 45px;
  overflow: hidden;
}
.item {
  display: flex;
  align-items: flex-start;
  gap: 27px;
  padding: 33px 0 35px;
  border-bottom: 3px solid #eeeff1;
}
.item figure { position: relative; flex: none; width: 315px; height: 252px; background: #fff; }
.plan { width: 315px; height: 252px; }
.plan-text { fill: #222; font-size: 5px; text-anchor: middle; }
.item figcaption {
  position: absolute;
  inset: auto 0 0;
  background: linear-gradient(rgba(0, 0, 0, .18), rgba(0, 0, 0, .5));
  color: #fff;
  font: 400 27px/45px Inter, "Noto Sans CJK SC", sans-serif;
  text-align: center;
}
.info { min-height: 255px; white-space: nowrap; }
.info h2 { font-size: 45px; font-weight: 700; line-height: 56px; color: #333; }
.meta {
  display: flex;
  gap: 4px;
  margin-top: 16px;
  font-size: 33px;
  line-height: 44px;
  color: #8c92a2;
}
.price {
  display: flex;
  align-items: center;
  gap: 10px;
  margin-top: 16px;
  line-height: 50px;
}
.price strong { font-size: 42px; font-weight: 700; color: #df5b55; }
.price span { font-size: 33px; color: #1b2743; }
.cut {
  display: flex;
  align-items: center;
  gap: 18px;
  margin-top: 28px;
  font-size: 36px;
  font-weight: 700;
  line-height: 44px;
  color: #5bbd72;
}
.tag { width: 38px; height: 38px; fill: none; stroke: #5bbd72; stroke-width: 4; }

/* Watermark laid over the whole list */
.watermark { position: absolute; inset: 0; opacity: .05; pointer-events: none; }
.mark-name { font-size: 42px; font-weight: 900; }
.mark-kind { font-size: 36px; font-weight: 500; }

/* Floating tools */
.floats {
  position: absolute;
  right: 45px;
  bottom: 260px;
  display: flex;
  flex-direction: column;
  align-items: center;
  gap: 27px;
}
.tool {
  display: flex;
  flex-direction: column;
  align-items: center;
  justify-content: center;
  gap: 2px;
  width: 126px;
  height: 126px;
  border: 3px solid #dcdde2;
  border-radius: 26px;
  background: #fff;
  box-shadow: 0 6px 30px rgba(60, 70, 110, .1);
  color: #434b5c;
  font-size: 29px;
  line-height: 42px;
}
.chat {
  position: relative;
  width: 132px;
  height: 132px;
  margin-top: 15px;
  border-radius: 50%;
  background: #d9dbf6;
}
.badge {
  position: absolute;
  top: -12px;
  right: -27px;
  width: 72px;
  border-radius: 20px 20px 20px 2px;
  background: #e94b45;
  color: #fff;
  font-size: 27px;
  line-height: 39px;
}

/* System navigation */
nav {
  position: relative;
  display: flex;
  justify-content: center;
  gap: 183px;
  padding: 34px 0;
  background: #f7f7f7;
}
nav button svg { fill: none; stroke: #8a8a8a; stroke-width: 4; }
.smudge { position: absolute; right: 23px; bottom: 16px; }
```
